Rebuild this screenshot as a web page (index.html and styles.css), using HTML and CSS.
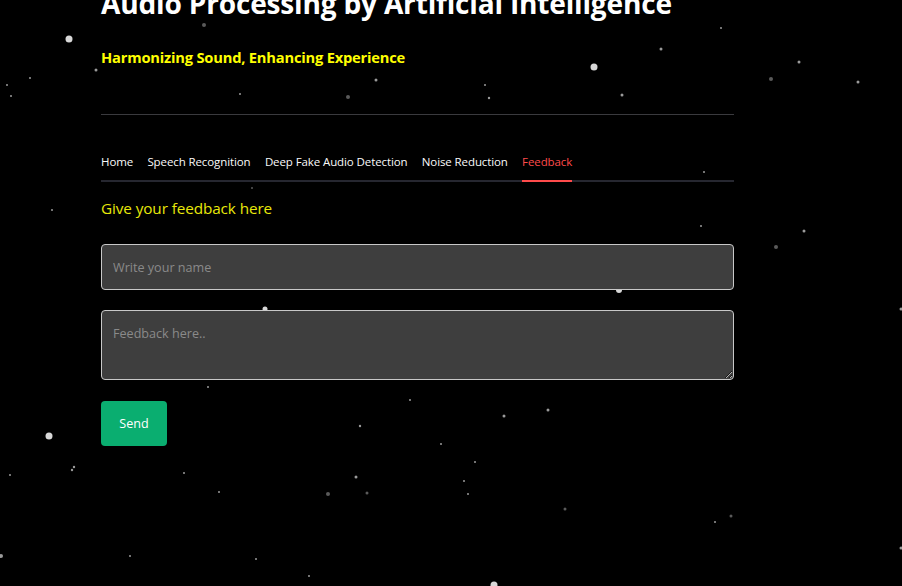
FILE: index.html
```html
<!DOCTYPE html>
<html lang="en">
<head>
<meta charset="utf-8">
<title>Audio Processing by Artificial Intelligence</title>
<link rel="stylesheet" href="styles.css">
</head>
<body>
<svg class="stars" width="902" height="586" viewBox="0 0 902 586" aria-hidden="true">
  <g fill="#d8d8d8">
    <circle cx="69" cy="39" r="3.5"/>
    <circle cx="594" cy="67" r="3.5"/>
    <circle cx="619" cy="290" r="3"/>
    <circle cx="265" cy="309" r="2.5"/>
    <circle cx="49" cy="436" r="3.5"/>
    <circle cx="494" cy="585" r="3.5"/>
  </g>
  <g fill="#9a9a9a">
    <circle cx="30" cy="78" r="1"/>
    <circle cx="7" cy="85" r="1"/>
    <circle cx="11" cy="96" r="1"/>
    <circle cx="96" cy="70" r="1.5"/>
    <circle cx="240" cy="94" r="1"/>
    <circle cx="52" cy="210" r="1"/>
    <circle cx="252" cy="188" r="0.8"/>
    <circle cx="376" cy="80" r="1.5"/>
    <circle cx="485" cy="85" r="1"/>
    <circle cx="489" cy="98" r="1.2"/>
    <circle cx="622" cy="95" r="1.5"/>
    <circle cx="661" cy="49" r="1.5"/>
    <circle cx="721" cy="28" r="1"/>
    <circle cx="799" cy="62" r="1.5"/>
    <circle cx="858" cy="82" r="1.5"/>
    <circle cx="704" cy="172" r="1"/>
    <circle cx="701" cy="226" r="1"/>
    <circle cx="804" cy="231" r="1.5"/>
    <circle cx="208" cy="387" r="1"/>
    <circle cx="410" cy="400" r="1"/>
    <circle cx="360" cy="426" r="1.2"/>
    <circle cx="441" cy="444" r="1"/>
    <circle cx="504" cy="416" r="1.5"/>
    <circle cx="548" cy="410" r="1.5"/>
    <circle cx="74" cy="467" r="1.2"/>
    <circle cx="72" cy="470" r="1.2"/>
    <circle cx="10" cy="475" r="1"/>
    <circle cx="184" cy="473" r="1"/>
    <circle cx="219" cy="492" r="1"/>
    <circle cx="356" cy="477" r="1.5"/>
    <circle cx="475" cy="462" r="1"/>
    <circle cx="464" cy="481" r="1"/>
    <circle cx="468" cy="494" r="1"/>
    <circle cx="715" cy="522" r="1"/>
    <circle cx="130" cy="556" r="1"/>
    <circle cx="256" cy="559" r="1"/>
    <circle cx="309" cy="576" r="1"/>
    <circle cx="901" cy="309" r="1.5"/>
    <circle cx="901" cy="548" r="1.5"/>
    <circle cx="1" cy="556" r="2"/>
  </g>
  <g fill="#5a5a5a">
    <circle cx="204" cy="25" r="2"/>
    <circle cx="348" cy="97" r="2"/>
    <circle cx="771" cy="79" r="2"/>
    <circle cx="776" cy="247" r="2"/>
    <circle cx="328" cy="494" r="2"/>
    <circle cx="367" cy="493" r="1.5"/>
    <circle cx="565" cy="509" r="1.5"/>
    <circle cx="731" cy="516" r="1.5"/>
  </g>
</svg>

<main class="page">
  <h1 class="title">Audio Processing by Artificial Intelligence</h1>
  <p class="subtitle">Harmonizing Sound, Enhancing Experience</p>
  <hr class="divider">

  <nav class="tabs">
    <span class="tab">Home</span>
    <span class="tab">Speech Recognition</span>
    <span class="tab">Deep Fake Audio Detection</span>
    <span class="tab">Noise Reduction</span>
    <span class="tab tab-active">Feedback</span>
  </nav>

  <h3 class="prompt">Give your feedback here</h3>

  <form class="form">
    <input class="field" type="text" placeholder="Write your name">
    <textarea class="field area" placeholder="Feedback here.."></textarea>
    <button class="send" type="button">Send</button>
  </form>
</main>
</body>
</html>
```

FILE: styles.css
```css
html, body {
  margin: 0;
  padding: 0;
  background: #000;
  height: 100%;
  overflow: hidden;
}

body {
  font-family: "Open Sans", "Noto Sans", sans-serif;
  color: #fafafa;
  position: relative;
}

.stars {
  position: absolute;
  left: 0;
  top: 0;
  z-index: 0;
}

.page {
  position: relative;
  z-index: 1;
  width: 633px;
  margin-left: 101px;
  display: flex;
  flex-direction: column;
}

.title {
  margin: -17px 0 0 0;
  font-size: 28.1px;
  font-weight: 700;
  line-height: 40px;
  color: #fff;
  letter-spacing: -0.2px;
}

.subtitle {
  margin: 24px 0 0 0;
  font-size: 14.7px;
  font-weight: 700;
  line-height: 20px;
  color: #ffff00;
  letter-spacing: -0.2px;
}

.divider {
  margin: 47px 0 0 0;
  border: 0;
  border-top: 1px solid #3a3a3e;
  height: 0;
}

.tabs {
  margin-top: 37px;
  display: flex;
  gap: 14.3px;
  border-bottom: 2px solid #262730;
}

.tab {
  font-size: 11.5px;
  line-height: 20px;
  padding: 0 0 8px 0;
  color: #fafafa;
  letter-spacing: -0.1px;
  margin-bottom: -2px;
  border-bottom: 2px solid transparent;
}

.tab-active {
  color: #ff4b4b;
  border-bottom-color: #ff4b4b;
}

.prompt {
  margin: 14px 0 0 0;
  font-size: 15.3px;
  font-weight: 400;
  line-height: 24px;
  color: #e8e80a;
  letter-spacing: -0.1px;
}

.form {
  margin-top: 24px;
  display: flex;
  flex-direction: column;
  align-items: flex-start;
}

.field {
  box-sizing: border-box;
  width: 633px;
  height: 46px;
  background: #3e3e3e;
  border: 1px solid #c8c8c8;
  border-radius: 4px;
  color: #fafafa;
  font-family: "Open Sans", "Noto Sans", sans-serif;
  font-size: 12.6px;
  padding: 0 11px;
  outline: none;
  margin: 0;
}

.field::placeholder {
  color: #8a8a8a;
}

.area {
  margin-top: 20px;
  height: 70px;
  padding: 13px 11px 12px;
  resize: vertical;
  line-height: 20px;
}

.send {
  margin-top: 21px;
  width: 66px;
  height: 45px;
  background: #0aae70;
  border: 0;
  border-radius: 4px;
  color: #fff;
  font-family: "Open Sans", "Noto Sans", sans-serif;
  font-size: 12.6px;
  padding: 0;
}
```
